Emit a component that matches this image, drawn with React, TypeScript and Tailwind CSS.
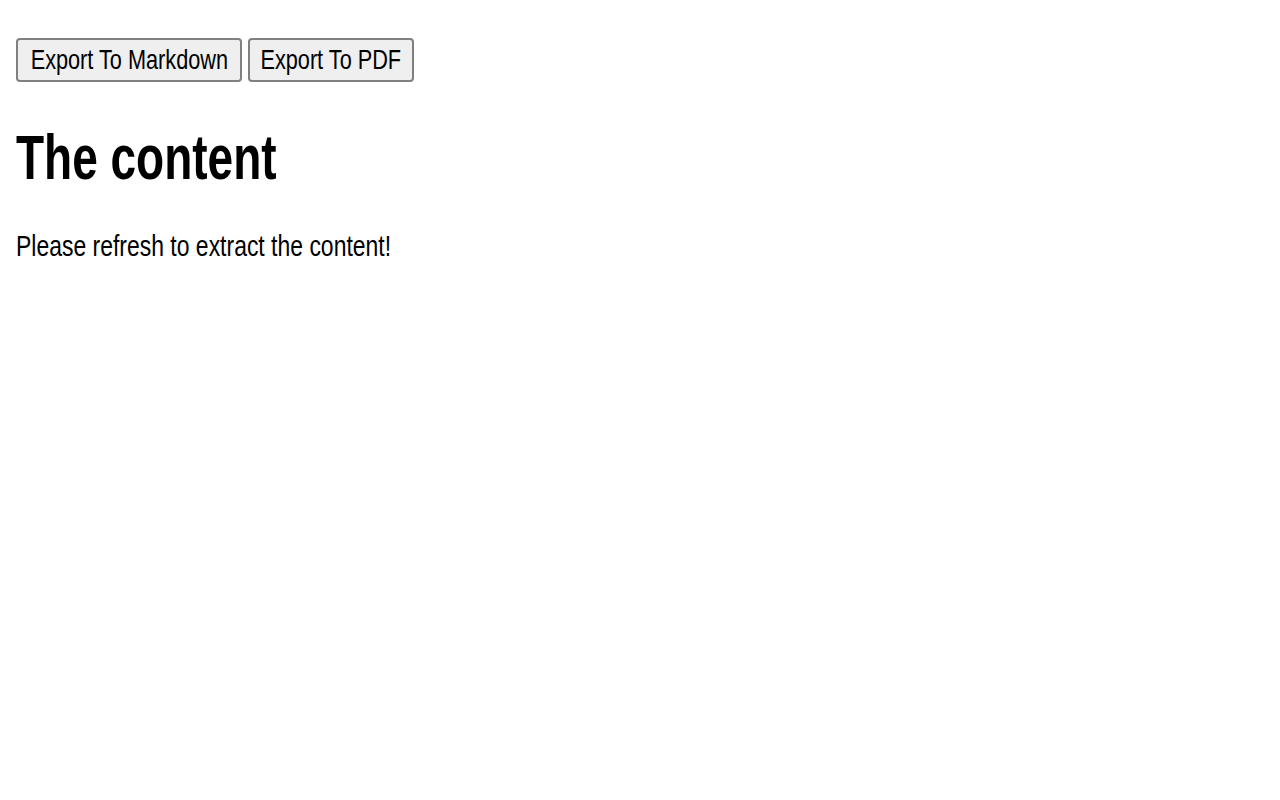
export default function App() {
  const exportMarkdown = () => {};
  const exportPdf = () => {};

  return (
    <div className="min-h-[800px] bg-white pl-4 pt-[38px] font-['Liberation_Sans',Arial,sans-serif] text-black">
      <div className="flex gap-[6px]">
        <button
          onClick={exportMarkdown}
          className="flex h-[44px] w-[226px] items-center justify-center rounded-[4px] border-2 border-[#808080] bg-[#efefef]"
        >
          <span className="inline-block scale-x-[0.775] whitespace-nowrap text-[28px] leading-[28px]">
            Export To Markdown
          </span>
        </button>
        <button
          onClick={exportPdf}
          className="flex h-[44px] w-[166px] items-center justify-center rounded-[4px] border-2 border-[#808080] bg-[#efefef]"
        >
          <span className="inline-block scale-x-[0.775] whitespace-nowrap text-[28px] leading-[28px]">
            Export To PDF
          </span>
        </button>
      </div>

      <h1 className="mt-[44px] origin-left scale-x-[0.73] whitespace-nowrap text-[63px] font-bold leading-[63px]">
        The content
      </h1>

      <p className="mt-[42px] origin-left scale-x-[0.765] whitespace-nowrap text-[30px] leading-[30px]">
        Please refresh to extract the content!
      </p>
    </div>
  );
}
